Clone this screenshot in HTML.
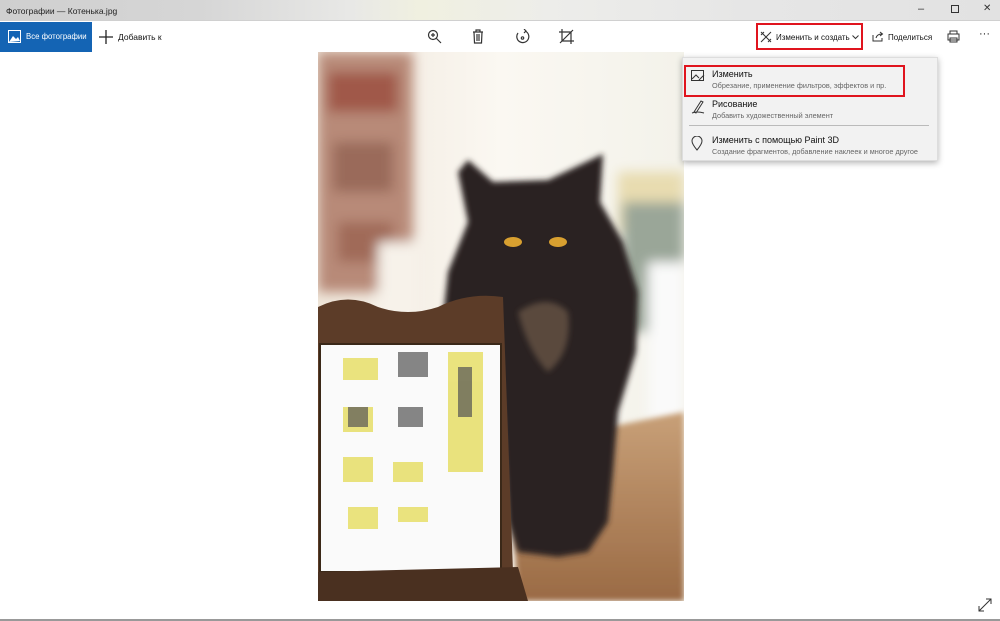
<!DOCTYPE html>
<html><head><meta charset="utf-8"><style>
*{margin:0;padding:0;box-sizing:border-box}
body{width:1000px;height:621px;overflow:hidden;background:#fff;font-family:"Liberation Sans","Noto Sans CJK SC",sans-serif;position:relative;color:#111;white-space:nowrap}
.tb{position:absolute;left:0;top:0;width:1000px;height:21px;background:linear-gradient(90deg,#cfcfcf 0%,#d6d6d6 20%,#e8e8e6 35%,#f0f0e0 42%,#ededea 55%,#e6e6e6 75%,#e2e2e2 100%);border-bottom:1px solid #d0d0d0}
.tb .t{position:absolute;left:6px;top:6px;font-size:8.5px;color:#222}
.tb .c{position:absolute;top:3px;font-size:11px;color:#333}
.bar{position:absolute;top:22px;left:0;width:1000px;height:30px}
.all{position:absolute;left:0;top:0;width:92px;height:30px;background:#1464b4;color:#fff;font-size:7.8px;line-height:30px;padding-left:26px;overflow:hidden}
.txt{position:absolute;font-size:8.5px;top:10px}
.box{position:absolute;border:2.5px solid #e0141e}
.menu{position:absolute;left:682px;top:57px;width:256px;height:104px;background:#f2f2f2;box-shadow:0 2px 6px rgba(0,0,0,.3);border:1px solid #ddd}
.mi{position:absolute;left:29px;font-size:9px;color:#111}
.ms{position:absolute;left:29px;font-size:7.3px;color:#666}
</style></head><body>
<div class="tb"><span class="t">Фотографии — Котенька.jpg</span>
<span class="c" style="left:918px">–</span><span class="c" style="left:951px;top:5px;width:8px;height:8px;border:1px solid #333"></span><span class="c" style="left:983px;font-size:10px">✕</span></div>
<div class="bar">
<div class="all"><svg style="position:absolute;left:8px;top:8px" width="13" height="13" viewBox="0 0 13 13"><rect x=".5" y=".5" width="12" height="12" fill="none" stroke="#fff"/><path d="M1 12 L5 6 L8 9 L10 7 L12 11 Z" fill="#fff"/></svg>Все фотографии</div>
<svg style="position:absolute;left:99px;top:8px" width="14" height="14"><path d="M7 0V14M0 7H14" stroke="#222" stroke-width="1.3"/></svg>
<span class="txt" style="left:118px">Добавить к</span>
<svg style="position:absolute;left:427px;top:7px" width="15" height="15" viewBox="0 0 15 15" fill="none" stroke="#333" stroke-width="1.2"><circle cx="6" cy="6" r="4.5"/><path d="M9.5 9.5L14 14M4 6H8M6 4V8"/></svg>
<svg style="position:absolute;left:472px;top:7px" width="12" height="15" viewBox="0 0 12 15" fill="none" stroke="#333" stroke-width="1.2"><path d="M1 3H11M4 3V1H8V3M2 3L2.5 14H9.5L10 3M5 5V12M7 5V12"/></svg>
<svg style="position:absolute;left:515px;top:7px" width="15" height="16" viewBox="0 0 15 16" fill="none" stroke="#333" stroke-width="1.2"><path d="M3 4A6 6 0 1 0 10 2"/><path d="M9 0L11 2L9 4"/><circle cx="7.5" cy="9" r="1.2"/></svg>
<svg style="position:absolute;left:559px;top:7px" width="15" height="15" viewBox="0 0 15 15" fill="none" stroke="#333" stroke-width="1.2"><path d="M3 0V12H15M0 3H12V15M1 14L14 1"/></svg>
<svg style="position:absolute;left:760px;top:9px" width="12" height="12" viewBox="0 0 12 12" fill="none" stroke="#333"><path d="M1 1L11 11M11 1L1 11M1 4L4 1M8 11L11 8"/></svg>
<span class="txt" style="left:776px;font-size:8px;top:11px">Изменить и создать</span>
<svg style="position:absolute;left:852px;top:13px" width="7" height="5"><path d="M.5 .5L3.5 3.5L6.5 .5" fill="none" stroke="#333"/></svg>
<svg style="position:absolute;left:872px;top:9px" width="12" height="11" viewBox="0 0 12 11" fill="none" stroke="#333"><path d="M1 4V10H10V7M4 7Q5 3 10 3M8 1L10.5 3L8 5"/></svg>
<span class="txt" style="left:888px;font-size:8px;top:11px">Поделиться</span>
<svg style="position:absolute;left:947px;top:8px" width="13" height="13" viewBox="0 0 13 13" fill="none" stroke="#333"><path d="M3 4V1H10V4M1 4H12V10H1ZM3 8H10V12H3Z"/></svg>
<span class="txt" style="left:979px;top:6px;font-size:11px">···</span>
</div>
<div class="box" style="left:756px;top:23px;width:107px;height:27px"></div>

<svg style="position:absolute;left:318px;top:52px" width="366" height="549" viewBox="0 0 366 549">
<defs>
<filter id="b"><feGaussianBlur stdDeviation="6"/></filter>
<filter id="b2"><feGaussianBlur stdDeviation="3"/></filter>
<linearGradient id="bg" x1="0" x2="1"><stop offset="0" stop-color="#efe6da"/><stop offset=".5" stop-color="#fbf8f2"/><stop offset="1" stop-color="#f3f2ea"/></linearGradient>
<linearGradient id="tab" x1="0" y1="0" x2="0" y2="1"><stop offset="0" stop-color="#c8a078"/><stop offset="1" stop-color="#9a6a44"/></linearGradient>
</defs>
<rect width="366" height="549" fill="url(#bg)"/>
<g filter="url(#b)">
<rect x="0" y="0" width="95" height="240" fill="#b88a78"/>
<rect x="10" y="20" width="70" height="40" fill="#a0584a"/>
<rect x="15" y="90" width="60" height="50" fill="#9a6a5a"/>
<rect x="20" y="170" width="55" height="40" fill="#a06a58"/>
<rect x="300" y="120" width="66" height="60" fill="#e8dcb0"/>
<rect x="305" y="150" width="61" height="130" fill="#9aa698"/>
<rect x="330" y="210" width="36" height="160" fill="#fafafa"/>
<rect x="60" y="190" width="40" height="80" fill="#f7f2ea"/>
</g>
<path d="M190 395 L366 360 L366 549 L200 549 Z" fill="url(#tab)" filter="url(#b2)"/>
<path d="M140 120 L150 108 L175 130 L230 128 L285 102 L282 150 L305 190 L320 240 L318 300 L300 360 L295 420 L290 470 L270 500 L240 505 L200 500 L190 470 L180 300 L125 265 L130 220 L150 170 Z" fill="#2b2420" filter="url(#b2)"/>
<path d="M200 260 Q230 240 250 260 Q255 300 230 320 Q210 300 200 260Z" fill="#5a4a3c" filter="url(#b2)"/>
<ellipse cx="195" cy="190" rx="9" ry="5" fill="#d8a030"/>
<ellipse cx="240" cy="190" rx="9" ry="5" fill="#d8a030"/>
<path d="M0 255 Q30 240 60 255 Q90 265 120 255 Q150 240 185 245 L195 520 L0 525Z" fill="#5c3c28"/>
<rect x="2" y="292" width="181" height="228" fill="#fafafa" stroke="#3a2818" stroke-width="2"/>
<g fill="#e8e070" opacity=".9"><rect x="25" y="306" width="35" height="22"/><rect x="130" y="300" width="35" height="120"/><rect x="25" y="355" width="30" height="25"/><rect x="25" y="405" width="30" height="25"/><rect x="75" y="410" width="30" height="20"/><rect x="30" y="455" width="30" height="22"/><rect x="80" y="455" width="30" height="15"/></g>
<g fill="#555" opacity=".7"><rect x="80" y="300" width="30" height="25"/><rect x="30" y="355" width="20" height="20"/><rect x="140" y="315" width="14" height="50"/><rect x="80" y="355" width="25" height="20"/></g>
<path d="M-2 520 L200 515 L210 549 L-2 549Z" fill="#4a3020"/>
</svg>

<div class="menu">
<svg style="position:absolute;left:8px;top:12px" width="14" height="12" viewBox="0 0 14 12" fill="none" stroke="#333"><rect x=".5" y=".5" width="12" height="10"/><path d="M1 9L5 5L8 8M8 10L13 5"/></svg>
<span class="mi" style="top:11px">Изменить</span>
<span class="ms" style="top:23px">Обрезание, применение фильтров, эффектов и пр.</span>
<svg style="position:absolute;left:8px;top:42px" width="14" height="14" viewBox="0 0 14 14" fill="none" stroke="#333"><path d="M3 12L10 1L12 2L5 13ZM1 13Q6 11 13 13"/></svg>
<span class="mi" style="top:41px">Рисование</span>
<span class="ms" style="top:53px">Добавить художественный элемент</span>
<div style="position:absolute;left:6px;right:8px;top:67px;height:1px;background:#bbb"></div>
<svg style="position:absolute;left:8px;top:78px" width="12" height="15" viewBox="0 0 12 15" fill="none" stroke="#333"><path d="M6 14Q1 8 1 5A5 5 0 0 1 11 5Q11 8 6 14Z"/></svg>
<span class="mi" style="top:77px">Изменить с помощью Paint 3D</span>
<span class="ms" style="top:89px">Создание фрагментов, добавление наклеек и многое другое</span>
</div>
<div class="box" style="left:684px;top:65px;width:221px;height:32px"></div>
<svg style="position:absolute;left:978px;top:598px" width="14" height="14" viewBox="0 0 14 14" fill="none" stroke="#333"><path d="M1 13L13 1M1 8V13H6M8 1H13V6"/></svg>
<div style="position:absolute;left:0;top:619px;width:1000px;height:2px;background:#999"></div>
</body></html>
